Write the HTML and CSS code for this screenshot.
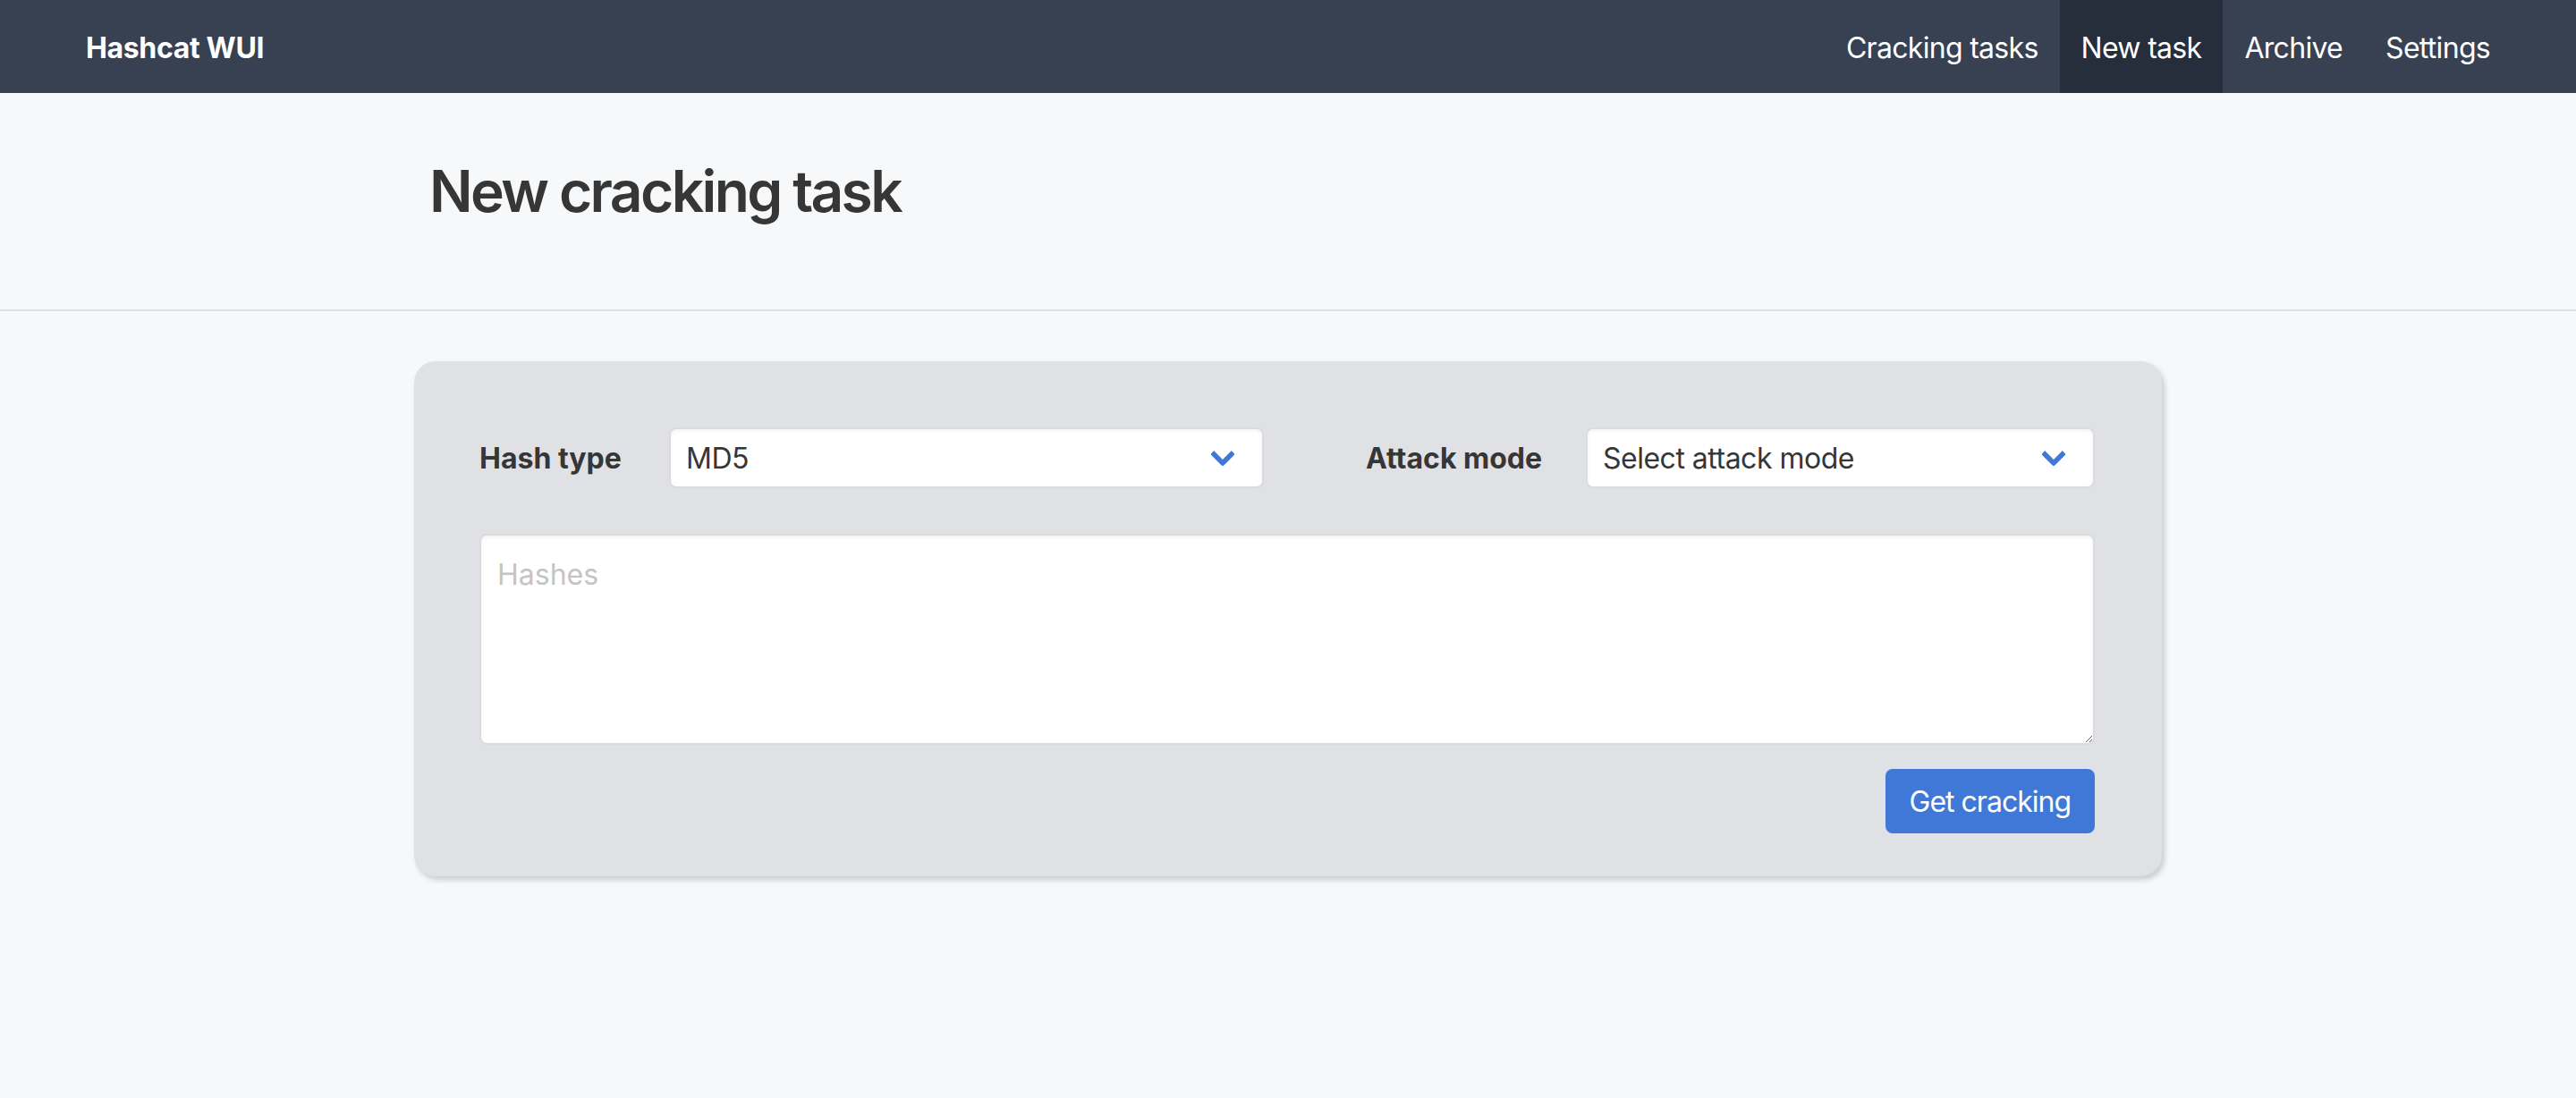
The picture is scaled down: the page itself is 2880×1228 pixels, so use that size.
FILE: index.html
```html
<!DOCTYPE html>
<html lang="en">
<head>
<meta charset="utf-8">
<title>Hashcat WUI</title>
<link rel="stylesheet" href="styles.css">
</head>
<body>
<nav class="navbar">
  <div class="navbar-inner">
    <a class="brand" href="#">Hashcat WUI</a>
    <div class="navbar-end">
      <a class="nav-item" href="#">Cracking tasks</a>
      <a class="nav-item is-active" href="#">New task</a>
      <a class="nav-item" href="#">Archive</a>
      <a class="nav-item" href="#">Settings</a>
    </div>
  </div>
</nav>
<section class="hero">
  <div class="hero-container">
    <h1 class="title">New cracking task</h1>
  </div>
</section>
<main class="main">
  <form class="box">
    <div class="row">
      <label class="label label-hash">Hash type</label>
      <div class="select select-hash"><select><option>MD5</option></select></div>
      <label class="label label-attack">Attack mode</label>
      <div class="select select-attack"><select><option>Select attack mode</option></select></div>
    </div>
    <textarea class="textarea" placeholder="Hashes"></textarea>
    <div class="actions"><button class="button" type="button">Get cracking</button></div>
  </form>
</main>
</body>
</html>
```
FILE: styles.css
```css
html, body {
  margin: 0;
  padding: 0;
}
body {
  background: #f7f8fa;
  font-family: Inter, "Noto Sans", sans-serif;
  color: #363636;
  height: 1228px;
  overflow: hidden;
}
*, *::before, *::after {
  box-sizing: border-box;
}
.navbar {
  height: 104px;
  background: #374151;
}
.navbar-inner {
  display: flex;
  justify-content: space-between;
  height: 100%;
  padding: 0 72px;
}
.brand {
  display: flex;
  align-items: center;
  padding: 2px 24px 0;
  font-size: 32px;
  font-weight: 700;
  letter-spacing: -0.35px;
  color: #fff;
  text-decoration: none;
}
.navbar-end {
  display: flex;
}
.nav-item {
  display: flex;
  align-items: center;
  padding: 2px 24px 0;
  font-size: 32px;
  letter-spacing: -0.7px;
  color: #fff;
  text-decoration: none;
}
.nav-item.is-active {
  background: #262d3b;
}
.hero {
  padding: 74px 0 96px;
  border-bottom: 2px solid #dfe1e6;
}
.hero-container {
  width: 1920px;
  margin: 0 auto;
}
.title {
  margin: 0;
  font-size: 64px;
  line-height: 72px;
  font-weight: 600;
  letter-spacing: -2.6px;
  color: #363636;
}
.main {
  padding-top: 56px;
}
.box {
  width: 1954px;
  margin: 0 auto;
  padding: 74px 75px 48px 73px;
  background: #dfe1e5;
  border-radius: 24px;
  box-shadow: 3px 4px 6px rgba(0, 0, 0, 0.18);
}
.row {
  display: flex;
  align-items: center;
  height: 68px;
}
.label {
  flex: none;
  font-size: 32px;
  font-weight: 700;
  color: #363636;
}
.label-hash {
  width: 212px;
}
.label-attack {
  width: 246px;
  margin-left: 114px;
}
.select {
  position: relative;
  height: 68px;
  font-size: 32px;
}
.select-hash {
  width: 665px;
  flex: none;
}
.select-attack {
  flex: 1;
}
.select select {
  appearance: none;
  -webkit-appearance: none;
  width: 100%;
  height: 100%;
  margin: 0;
  padding: 0 80px 0 17px;
  border: 2px solid #dbdbdb;
  border-radius: 8px;
  background: #fff;
  box-shadow: inset 0 2px 4px rgba(10, 10, 10, 0.05);
  font-family: inherit;
  font-size: 32px;
  letter-spacing: -0.5px;
  color: #363636;
}
.select::after {
  content: "";
  position: absolute;
  top: 50%;
  right: 36px;
  width: 20px;
  height: 20px;
  margin-top: -14px;
  border: 6px solid #3f78d6;
  border-right: 0;
  border-top: 0;
  border-radius: 3px;
  transform: rotate(-45deg);
  pointer-events: none;
}
.textarea {
  display: block;
  width: 100%;
  height: 236px;
  margin: 51px 0 0;
  padding: 20px 18px;
  border: 2px solid #dbdbdb;
  border-radius: 8px;
  background: #fff;
  box-shadow: inset 0 2px 4px rgba(10, 10, 10, 0.05);
  font-family: inherit;
  font-size: 32px;
  line-height: 1.5;
  color: #363636;
  resize: vertical;
}
.textarea::placeholder {
  color: #c4c4c4;
}
.actions {
  display: flex;
  justify-content: flex-end;
  margin-top: 27px;
}
.button {
  height: 72px;
  padding: 0 27px;
  border: none;
  border-radius: 8px;
  background: #3f78d6;
  color: #fff;
  font-family: inherit;
  font-size: 32px;
  letter-spacing: -1px;
}
```
